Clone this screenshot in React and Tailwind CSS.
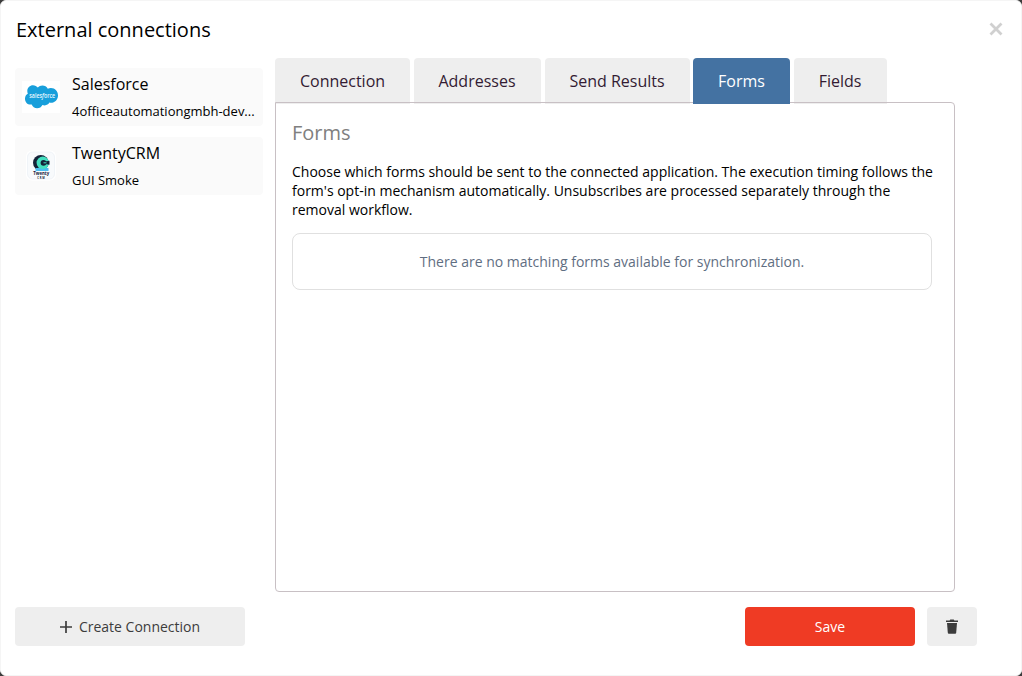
import React from 'react';

const connections = [
  { name: 'Salesforce', detail: '4officeautomationgmbh-dev...', logo: 'salesforce' },
  { name: 'TwentyCRM', detail: 'GUI Smoke', logo: 'twenty' },
];

const tabs = [
  { label: 'Connection', width: 'w-[135px]' },
  { label: 'Addresses', width: 'w-[127px] ml-1 pr-px' },
  { label: 'Send Results', width: 'w-[145px] ml-1 pr-px' },
  { label: 'Forms', width: 'w-[97px] ml-[3px]', active: true },
  { label: 'Fields', width: 'w-[93px] ml-1 pr-px' },
];

const SalesforceLogo = () => (
  <svg width="38" height="32" viewBox="0 0 38 32" className="shrink-0">
    <rect width="38" height="32" fill="#fff" />
    <path
      d="M15.8 6.6C17 5.3 18.6 4.6 20.4 4.6c2.3 0 4.3 1.2 5.4 3.1.9-.4 2-.6 3.1-.6 4.2 0 7.1 3.3 7.1 7.3s-3 7.4-7.1 7.4c-.5 0-1 0-1.5-.2-.9 1.7-2.7 2.8-4.7 2.8-.8 0-1.6-.2-2.3-.5-.9 2-2.9 3.3-5.3 3.3-2.5 0-4.6-1.5-5.4-3.7-.4.1-.8.1-1.2.1C5.4 23.6 3 20.9 3 17.7c0-2.2 1.2-4.1 2.9-5.1-.4-.8-.6-1.7-.6-2.7C5.3 6.7 7.8 4.2 11 4.2c2 0 3.7 1 4.8 2.4z"
      fill="#189fdb"
    />
    <text
      x="20.2"
      y="16.6"
      textAnchor="middle"
      fontSize="6.2"
      fontWeight="600"
      fill="#e8f8ff"
      textLength="26"
      lengthAdjust="spacingAndGlyphs"
      className="font-['Open_Sans',sans-serif]"
    >
      sales<tspan fontStyle="italic">f</tspan>orce
    </text>
  </svg>
);

const TwentyLogo = () => (
  <svg width="38" height="32" viewBox="0 0 38 32" className="shrink-0">
    <rect x="4" y="0.5" width="30" height="30" rx="6" fill="#fff" />
    <rect x="5.5" y="2" width="27" height="27" rx="5" fill="#f8fafc" stroke="#f0f4f8" />
    <circle cx="18.8" cy="12.8" r="7.8" fill="#142238" />
    <path d="M13.5 18h13v3h-13z" fill="#4dbcf0" />
    <circle cx="20.8" cy="12.8" r="6.2" fill="#44dfc0" />
    <circle cx="21.5" cy="12.8" r="2.9" fill="#142238" />
    <path d="M23 11.500l4.500-.8v4l-4.500-.6z" fill="#142238" />
    <path d="M21.500 12.800h3" stroke="#44dfc0" strokeWidth="1" />
    <g
      textAnchor="middle"
      fontWeight="700"
      fill="#142238"
      className="font-['Open_Sans',sans-serif]"
    >
      <text x="19.2" y="25.3" fontSize="5" textLength="16" lengthAdjust="spacingAndGlyphs">
        Twenty
      </text>
      <text x="19" y="29.2" fontSize="2.6" textLength="7.5">
        CRM
      </text>
    </g>
  </svg>
);

const ConnectionItem = ({ connection }) => (
  <div className="flex h-[58px] w-[248px] items-center rounded bg-[#fafafa] pl-[7px]">
    {connection.logo === 'salesforce' ? <SalesforceLogo /> : <TwentyLogo />}
    <div className="ml-3 pb-px">
      <div className="text-base leading-6">{connection.name}</div>
      <div className="mt-[5px] whitespace-nowrap text-[13px] leading-5">{connection.detail}</div>
    </div>
  </div>
);

export default function App() {
  return (
    <div className="h-[676px] w-[1022px] bg-[#3c3c3c] font-['Open_Sans',sans-serif] text-black">
      <div className="flex h-full flex-col rounded-md border border-[#f5f5f5] bg-white">
        <header className="flex h-[57px] items-center justify-between pl-[15px] pr-[18px]">
          <h1 className="text-xl leading-7">External connections</h1>
          <button aria-label="Close" className="pb-px">
            <svg width="14" height="14" viewBox="0 0 14 14" stroke="#d0d0d0" strokeWidth="2.8">
              <path d="M1.500 1.500l11 11M12.500 1.500l-11 11" />
            </svg>
          </button>
        </header>

        <main className="flex h-[534px] pl-[14px]">
          <aside className="flex w-[260px] flex-col gap-[11px] pt-[10px]">
            {connections.map((connection) => (
              <ConnectionItem key={connection.name} connection={connection} />
            ))}
          </aside>

          <section className="flex w-[680px] flex-col">
            <div className="flex h-11 items-start">
              {tabs.map((tab) => (
                <button
                  key={tab.label}
                  className={`${tab.width} h-[46px] shrink-0 rounded-t text-base ${
                    tab.active ? 'relative z-10 bg-[#4472a2] text-white' : 'bg-[#eee] text-[#331b33]'
                  }`}
                >
                  {tab.label}
                </button>
              ))}
            </div>
            <div className="relative h-[490px] rounded-b rounded-tr border border-[#c8c0c4] px-4 pt-4">
              <h2 className="text-xl leading-7 text-[#808080]">Forms</h2>
              <p className="mt-[15px] w-[645px] text-sm leading-[19px]">
                Choose which forms should be sent to the connected application. The execution timing
                follows the form's opt-in mechanism automatically. Unsubscribes are processed
                separately through the removal workflow.
              </p>
              <div className="mt-[14px] flex h-[57px] w-[640px] items-center justify-center rounded-lg border border-[#e0e0e0] text-sm text-[#5f6e82]">
                There are no matching forms available for synchronization.
              </div>
            </div>
          </section>
        </main>

        <footer className="mt-[15px] flex h-[39px] items-stretch pl-[14px] text-sm">
          <button className="flex w-[230px] items-center justify-center gap-[7px] rounded bg-[#eee] text-[#3c3c3c]">
            <svg width="12" height="12" viewBox="0 0 12 12" stroke="#3c3c3c" strokeWidth="1.7">
              <path d="M6 0v12M0 6h12" />
            </svg>
            Create Connection
          </button>
          <button className="ml-[500px] w-[170px] rounded bg-[#ef3b24] text-white">Save</button>
          <button
            aria-label="Delete connection"
            className="ml-3 flex w-[50px] items-center justify-center rounded bg-[#eee]"
          >
            <svg width="12" height="15" viewBox="0 0 12 15" fill="#3c3c3c">
              <path d="M0 1.400h3.600L4.300.500h3.400l.7.900H12v1.500H0z" />
              <path d="M1 4h10l-.8 9.800q-.1.900-1 .9H2.800q-.9 0-1-.9z" />
            </svg>
          </button>
        </footer>
      </div>
    </div>
  );
}
